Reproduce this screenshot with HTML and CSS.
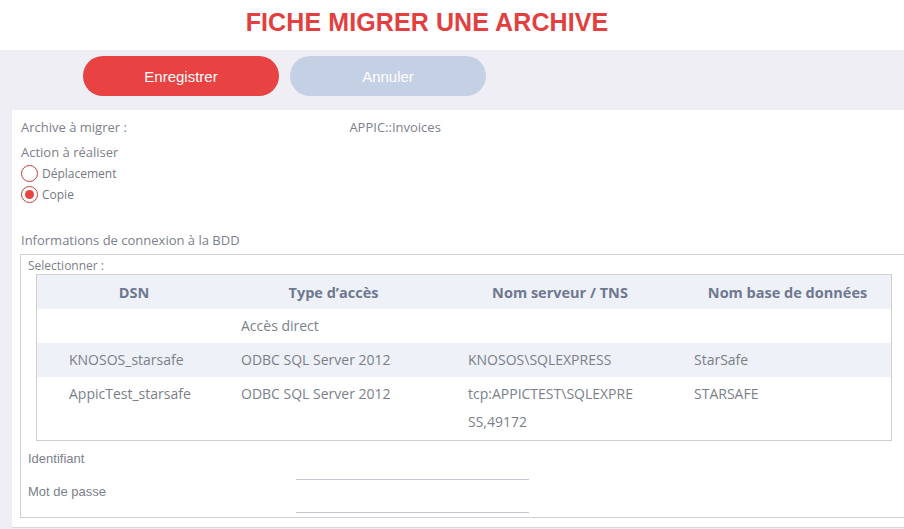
FILE: index.html
```html
<!DOCTYPE html>
<html lang="fr">
<head>
    <meta charset="UTF-8">
    <meta name="viewport" content="width=device-width, initial-scale=1.0">
    <title>Fiche migrer une archive</title>
    <link rel="stylesheet" href="styles.css">
</head>
<body>
    <header class="title-bar">
        <h1>FICHE MIGRER UNE ARCHIVE</h1>
    </header>

    <div class="page">
        <div class="actions">
            <button class="btn btn-save">Enregistrer</button>
            <button class="btn btn-cancel">Annuler</button>
        </div>

        <div class="panel">
            <div class="row">
                <span class="label">Archive à migrer :</span>
                <span class="value">APPIC::Invoices</span>
            </div>
            <div class="row">Action à réaliser</div>
            <label class="radio"><input type="radio" name="action"> Déplacement</label>
            <label class="radio"><input type="radio" name="action" checked> Copie</label>

            <div class="row section">Informations de connexion à la BDD</div>

            <div class="box">
                <div class="box-title">Selectionner :</div>
                <div class="table-wrap">
                    <table>
                        <thead>
                            <tr>
                                <th class="c1">DSN</th>
                                <th class="c2">Type d’accès</th>
                                <th class="c3">Nom serveur / TNS</th>
                                <th class="c4">Nom base de données</th>
                            </tr>
                        </thead>
                        <tbody>
                            <tr>
                                <td class="c1"></td>
                                <td>Accès direct</td>
                                <td></td>
                                <td></td>
                            </tr>
                            <tr class="alt">
                                <td class="c1">KNOSOS_starsafe</td>
                                <td>ODBC SQL Server 2012</td>
                                <td>KNOSOS\SQLEXPRESS</td>
                                <td>StarSafe</td>
                            </tr>
                            <tr>
                                <td class="c1">AppicTest_starsafe</td>
                                <td>ODBC SQL Server 2012</td>
                                <td><span class="wrap">tcp:APPICTEST\SQLEXPRESS,49172</span></td>
                                <td>STARSAFE</td>
                            </tr>
                        </tbody>
                    </table>
                </div>

                <div class="field first">
                    <span class="field-label">Identifiant</span>
                    <input type="text" class="field-input">
                </div>
                <div class="field">
                    <span class="field-label">Mot de passe</span>
                    <input type="password" class="field-input">
                </div>
            </div>
        </div>
    </div>
</body>
</html>
```

FILE: styles.css
```css
body {
    margin: 0;
    font-family: 'Open Sans', 'DejaVu Sans', sans-serif;
    color: #7b808b;
    background: #ffffff;
    overflow: hidden;
}

.title-bar {
    height: 50px;
    background: #ffffff;
    display: flex;
    justify-content: center;
}

.title-bar h1 {
    margin: 8px 0 0 -50px;
    font-family: 'Liberation Sans Narrow', 'Liberation Sans', sans-serif;
    font-stretch: condensed;
    font-size: 25px;
    font-weight: bold;
    color: #e2403f;
    letter-spacing: 0.1px;
}

.page {
    background: #eeeef4;
    padding-left: 12px;
    padding-bottom: 3px;
    border-bottom: 4px solid #d4d4d8;
}

.actions {
    display: flex;
    gap: 11px;
    padding: 6px 0 14px 71px;
}

.btn {
    width: 196px;
    height: 40px;
    border: none;
    border-radius: 20px;
    color: #ffffff;
    font-family: 'Liberation Sans Narrow', 'Liberation Sans', sans-serif;
    font-stretch: condensed;
    font-size: 15px;
}

.btn-save {
    background: #e94243;
}

.btn-cancel {
    background: #c4d0e4;
}

.panel {
    background: #ffffff;
    padding: 9px 0 9px 8px;
    font-size: 13px;
    border-bottom: 1px solid #d9d9dc;
}

.row {
    height: 25px;
    line-height: 16px;
    padding-left: 1px;
}

.label {
    display: inline-block;
    width: 325px;
}

.section {
    margin-top: 27px;
    height: 22px;
}

.radio {
    display: flex;
    align-items: center;
    gap: 4px;
    height: 21px;
    margin-top: -6px;
    margin-bottom: 6px;
    font-size: 12px;
    color: #737884;
}

.radio input {
    appearance: none;
    margin: 0 0 0 1px;
    width: 17px;
    height: 17px;
    border: 1.5px solid #c2403f;
    border-radius: 50%;
    display: flex;
    align-items: center;
    justify-content: center;
}

.radio input:checked::after {
    content: '';
    width: 9px;
    height: 9px;
    border-radius: 50%;
    background: #e64242;
}

.box {
    box-sizing: border-box;
    border: 1px solid #cfcfd3;
    border-right: none;
    padding: 3px 12px 0 7px;
    height: 264px;
}

.box-title {
    font-size: 12px;
    line-height: 16px;
}

.table-wrap {
    margin-left: 8px;
    border: 1px solid #cfcfd3;
    height: 165px;
}

table {
    width: 100%;
    border-collapse: collapse;
    font-size: 14px;
}

th {
    background: #eef1f7;
    color: #6e7890;
    font-size: 14.5px;
    font-weight: bold;
    height: 34px;
    padding: 0;
}

td {
    padding: 3px 10px;
    line-height: 28px;
    vertical-align: top;
    color: #7a7f89;
}

td.c1 {
    padding-left: 32px;
}

th.c1 { width: 194px; }
th.c2 { width: 227px; padding-right: 22px; box-sizing: border-box; }
th.c3 { width: 226px; padding-right: 22px; box-sizing: border-box; }

tr.alt td {
    background: #eef1f7;
}

.wrap {
    display: block;
    width: 170px;
    word-break: break-all;
}

.field {
    display: flex;
    align-items: flex-end;
    height: 33px;
}

.field.first {
    margin-top: 1px;
}

.field-label {
    width: 268px;
    font-family: 'Liberation Sans Narrow', 'Liberation Sans', sans-serif;
    font-stretch: condensed;
    font-size: 13px;
    line-height: 18px;
    align-self: center;
}

.field-input {
    width: 233px;
    height: 18px;
    margin-bottom: -5px;
    border: none;
    border-bottom: 1px solid #c6c7cf;
    outline: none;
    padding: 0;
}
```
